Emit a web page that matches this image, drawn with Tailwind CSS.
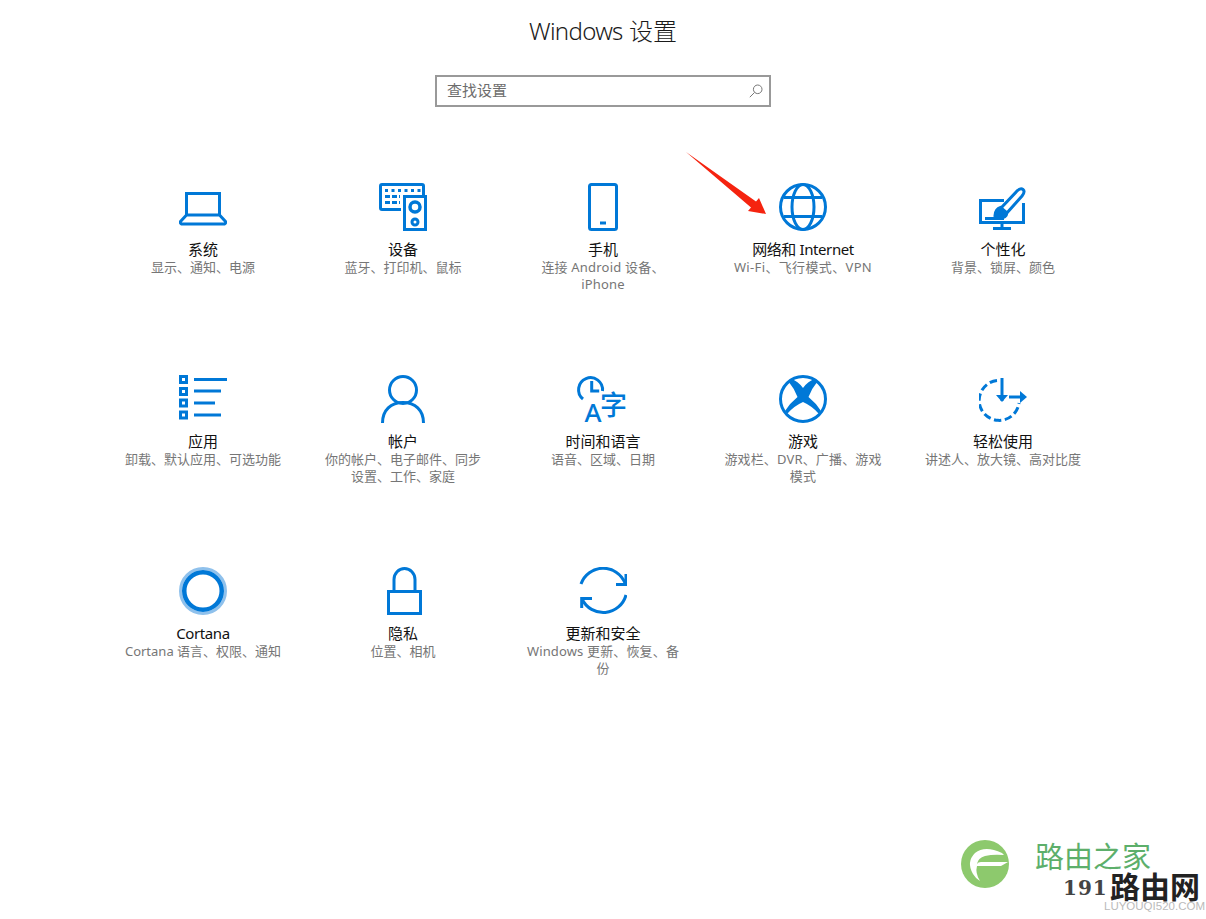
<!DOCTYPE html>
<html lang="zh-CN">
<head>
  <meta charset="UTF-8" />
  <title>Windows 设置</title>
  <script src="https://cdn.jsdelivr.net/npm/@tailwindcss/browser@4"></script>
</head>
<body class="bg-white w-[1206px] h-[919px] overflow-hidden relative font-['Noto_Sans','Noto_Sans_CJK_SC',sans-serif]">

  <!-- Header -->
  <header class="flex flex-col items-center pt-[13px]">
    <h1 class="text-[24px] leading-[36px] font-light text-[#1a1a1a]"><span class="tracking-[-0.7px]">Windows</span> 设置</h1>
    <div class="mt-[26px] w-[336px] h-[32px] border-2 border-[#999999] flex items-center justify-between pl-[10px] pr-[5px]">
      <span class="text-[15px] leading-[20px] pb-[3px] text-[#6d6d6d]">查找设置</span>
      <svg width="16" height="16" viewBox="0 0 16 16" fill="none" stroke="#777" stroke-width="1"><circle cx="9.7" cy="6.3" r="4.3"/><path d="M6.6 9.4 1.8 14.2"/></svg>
    </div>
  </header>

  <!-- Tiles -->
  <main class="grid grid-cols-5 auto-rows-[192px] w-[1000px] mx-auto mt-[76px] text-center">

    <div class="flex flex-col items-center">
      <svg class="w-12 h-12" viewBox="0 0 48 48" fill="none" stroke="#0078d7" stroke-width="3">
        <path d="M7.5 32V10.500h33V32"/><path d="M7.5 32h33l6 6.500q.5 2-1 2.500H2.500q-1.500-.5-1-2.500z"/>
      </svg>
      <div class="mt-[8px] text-[15px] leading-[20px] text-[#111]">系统</div>
      <div class="w-[160px] text-[13px] leading-[17px] text-[#767676]">显示、通知、电源</div>
    </div>

    <div class="flex flex-col items-center">
      <svg class="w-12 h-12" viewBox="0 0 48 48" fill="none" stroke="#0078d7" stroke-width="3">
        <path d="M22 26.500H3q-1.500 0-1.500-1.500V3q0-1.500 1.500-1.500h40q1.500 0 1.500 1.500v9"/>
        <path d="M25.500 13.500h21v33h-21z"/>
        <circle cx="36" cy="24" r="5" stroke-width="3.500"/><circle cx="36" cy="39" r="3"/>
        <path stroke-dasharray="3 3.500" d="M6 7.500h36"/>
        <path stroke-dasharray="5 2" d="M6 13.500h15M6 19.500h15"/>
      </svg>
      <div class="mt-[8px] text-[15px] leading-[20px] text-[#111]">设备</div>
      <div class="w-[160px] text-[13px] leading-[17px] text-[#767676]">蓝牙、打印机、鼠标</div>
    </div>

    <div class="flex flex-col items-center">
      <svg class="w-12 h-12" viewBox="0 0 48 48" fill="none" stroke="#0078d7" stroke-width="3">
        <rect x="10.500" y="1.500" width="27" height="45" rx="2"/><path d="M21 40h6"/>
      </svg>
      <div class="mt-[8px] text-[15px] leading-[20px] text-[#111]">手机</div>
      <div class="w-[160px] text-[13px] leading-[17px] text-[#767676] tracking-[0.2px]">连接 Android 设备、iPhone</div>
    </div>

    <div class="flex flex-col items-center">
      <svg class="w-12 h-12" viewBox="0 0 48 48" fill="none" stroke="#0078d7" stroke-width="3">
        <circle cx="24" cy="24" r="22.500"/><ellipse cx="24" cy="24" rx="11" ry="22.500"/>
        <path d="M5 14.500h38M5 33.500h38"/>
      </svg>
      <div class="mt-[8px] text-[15px] leading-[20px] text-[#111] tracking-[-0.4px]">网络和 Internet</div>
      <div class="w-[160px] text-[13px] leading-[17px] text-[#767676] tracking-[0.35px]">Wi-Fi、飞行模式、VPN</div>
    </div>

    <div class="flex flex-col items-center">
      <svg class="w-12 h-12" viewBox="0 0 48 48" fill="none" stroke="#0078d7" stroke-width="3">
        <path d="M25 17.500H1.500v22h43V20"/><path d="M23 40v6M14 45.500h18"/>
        <path d="M6 35.500h19"/>
        <path d="M22 25 38 8q3.500-3.500 6-1.500t-1 6.500L27 31"/>
        <path fill="#0078d7" d="M21.500 24.500q-5 1.500-5.500 8l8 2q4-1 3.500-5z"/>
      </svg>
      <div class="mt-[8px] text-[15px] leading-[20px] text-[#111]">个性化</div>
      <div class="w-[160px] text-[13px] leading-[17px] text-[#767676]">背景、锁屏、颜色</div>
    </div>

    <div class="flex flex-col items-center">
      <svg class="w-12 h-12" viewBox="0 0 48 48" fill="none" stroke="#0078d7" stroke-width="3">
        <path d="M1.500 1.500h6v6h-6zM1.500 13.500h6v6h-6zM1.500 25h6v6h-6zM1.500 37h6v6h-6z"/>
        <path d="M15 4.500h33M15 16h27M15 28h21M15 40h27"/>
      </svg>
      <div class="mt-[8px] text-[15px] leading-[20px] text-[#111]">应用</div>
      <div class="w-[160px] text-[13px] leading-[17px] text-[#767676]">卸载、默认应用、可选功能</div>
    </div>

    <div class="flex flex-col items-center">
      <svg class="w-12 h-12" viewBox="0 0 48 48" fill="none" stroke="#0078d7" stroke-width="3">
        <circle cx="24" cy="15" r="13.500"/><path d="M3.500 48C3.500 35 12 27.500 24 27.500S44.500 35 44.500 48"/>
      </svg>
      <div class="mt-[8px] text-[15px] leading-[20px] text-[#111]">帐户</div>
      <div class="w-[160px] text-[13px] leading-[17px] text-[#767676]">你的帐户、电子邮件、同步设置、工作、家庭</div>
    </div>

    <div class="flex flex-col items-center">
      <svg class="w-12 h-12 overflow-visible" viewBox="0 0 48 48" fill="none" stroke="#0078d7" stroke-width="3">
        <path d="M4 24A12 12 0 1 1 23.500 16"/><path d="M12.700 6v10h7.500"/>
        <text x="5.500" y="47" font-size="26" font-weight="500" fill="#0078d7" stroke="none" font-family="Noto Sans">A</text>
        <text x="21" y="40" font-size="27" font-weight="500" fill="#0078d7" stroke="none" font-family="Noto Sans CJK SC">字</text>
      </svg>
      <div class="mt-[8px] text-[15px] leading-[20px] text-[#111]">时间和语言</div>
      <div class="w-[160px] text-[13px] leading-[17px] text-[#767676]">语音、区域、日期</div>
    </div>

    <div class="flex flex-col items-center">
      <svg class="w-12 h-12" viewBox="0 0 48 48" fill="none" stroke="#0078d7" stroke-width="3">
        <circle cx="24" cy="24" r="22.500"/>
        <path fill="#0078d7" stroke="none" d="M12 4Q19 6 24 13 29 6 36 4L38.500 6.500Q33 13 29.500 22 37 28 42 36L39.500 38.500Q33 31 24 27 15 31 8.500 38.500L6 36Q11 28 18.500 22 15 13 9.500 6.500z"/>
      </svg>
      <div class="mt-[8px] text-[15px] leading-[20px] text-[#111]">游戏</div>
      <div class="w-[160px] text-[13px] leading-[17px] text-[#767676] tracking-[0.15px]">游戏栏、DVR、广播、游戏模式</div>
    </div>

    <div class="flex flex-col items-center">
      <svg class="w-12 h-12" viewBox="0 0 48 48" fill="none" stroke="#0078d7" stroke-width="3">
        <path d="M18 5.500A20 20 0 1 0 40 28" stroke-dasharray="7.500 3.500"/>
        <path d="M23 3v23"/><path fill="#0078d7" stroke="none" d="M17 20h12l-6 7z"/>
        <path d="M30 22h13"/><path fill="#0078d7" stroke="none" d="M41 16l7 6-7 6z"/>
      </svg>
      <div class="mt-[8px] text-[15px] leading-[20px] text-[#111]">轻松使用</div>
      <div class="w-[160px] text-[13px] leading-[17px] text-[#767676]">讲述人、放大镜、高对比度</div>
    </div>

    <div class="flex flex-col items-center">
      <svg class="w-12 h-12" viewBox="0 0 48 48" fill="none">
        <circle cx="24" cy="24" r="22.500" stroke="#8fc1ec" stroke-width="3"/>
        <circle cx="24" cy="24" r="18.750" stroke="#0078d7" stroke-width="4.500"/>
      </svg>
      <div class="mt-[8px] text-[15px] leading-[20px] text-[#111] tracking-[-0.4px]">Cortana</div>
      <div class="w-[160px] text-[13px] leading-[17px] text-[#767676]">Cortana 语言、权限、通知</div>
    </div>

    <div class="flex flex-col items-center">
      <svg class="w-12 h-12" viewBox="0 0 48 48" fill="none" stroke="#0078d7" stroke-width="3">
        <path d="M9.500 24.500h32v22h-32z"/><path d="M15 24.500V12.500a10.500 11 0 0 1 21 0v12"/>
      </svg>
      <div class="mt-[8px] text-[15px] leading-[20px] text-[#111]">隐私</div>
      <div class="w-[160px] text-[13px] leading-[17px] text-[#767676]">位置、相机</div>
    </div>

    <div class="flex flex-col items-center">
      <svg class="w-12 h-12" viewBox="0 0 48 48" fill="none" stroke="#0078d7" stroke-width="3">
        <path d="M2 17A23.500 23.500 0 0 1 46 16"/><path d="M47 28A23.500 23.500 0 0 1 3 32"/>
        <path d="M47 7v10.500H37M2.700 41V31.500H13"/>
      </svg>
      <div class="mt-[8px] text-[15px] leading-[20px] text-[#111]">更新和安全</div>
      <div class="w-[160px] text-[13px] leading-[17px] text-[#767676] tracking-[0.15px]">Windows 更新、恢复、备份</div>
    </div>
  </main>

  <!-- Red annotation arrow -->
  <svg class="absolute left-[680px] top-[146px]" width="95" height="80" viewBox="680 146 95 80">
    <path fill="#f5230f" d="M686 152 756 201.500 759 198 766 214 748 211 751 207.500z"/>
  </svg>

  <!-- Watermark -->
  <div class="absolute left-[961px] top-[840px] w-[48px] h-[48px]">
    <svg width="48" height="48" viewBox="0 0 48 48">
      <circle cx="24" cy="24" r="24" fill="#8dc96d"/>
      <path fill="#fff" d="M41 13Q24 5 14 13 5 22 12 34q3 5 7 7-5-8-3-15h24l7-4H20q-3 0-4 2 1-6 8-8 8-2 19-1z"/>
    </svg>
  </div>
  <div class="absolute left-[1035px] top-[840px] text-[29px] leading-[30px] text-[#5daf6b] font-['Noto_Sans_CJK_SC',sans-serif]">路由之家</div>
  <div class="absolute left-[1063px] top-[875px] text-[20px] leading-[26px] font-bold tracking-[1px] text-[#444] font-['DejaVu_Serif',serif]">191</div>
  <div class="absolute left-[1110px] top-[871px] text-[30px] leading-[28px] font-bold text-[#222] font-['Noto_Sans_CJK_SC',sans-serif]">路由网</div>
  <div class="absolute left-[1104px] top-[900px] text-[11.500px] leading-[13px] text-[#bbbbbb] font-['Liberation_Sans',sans-serif]">LUYOUQI520.COM</div>
</body>
</html>
